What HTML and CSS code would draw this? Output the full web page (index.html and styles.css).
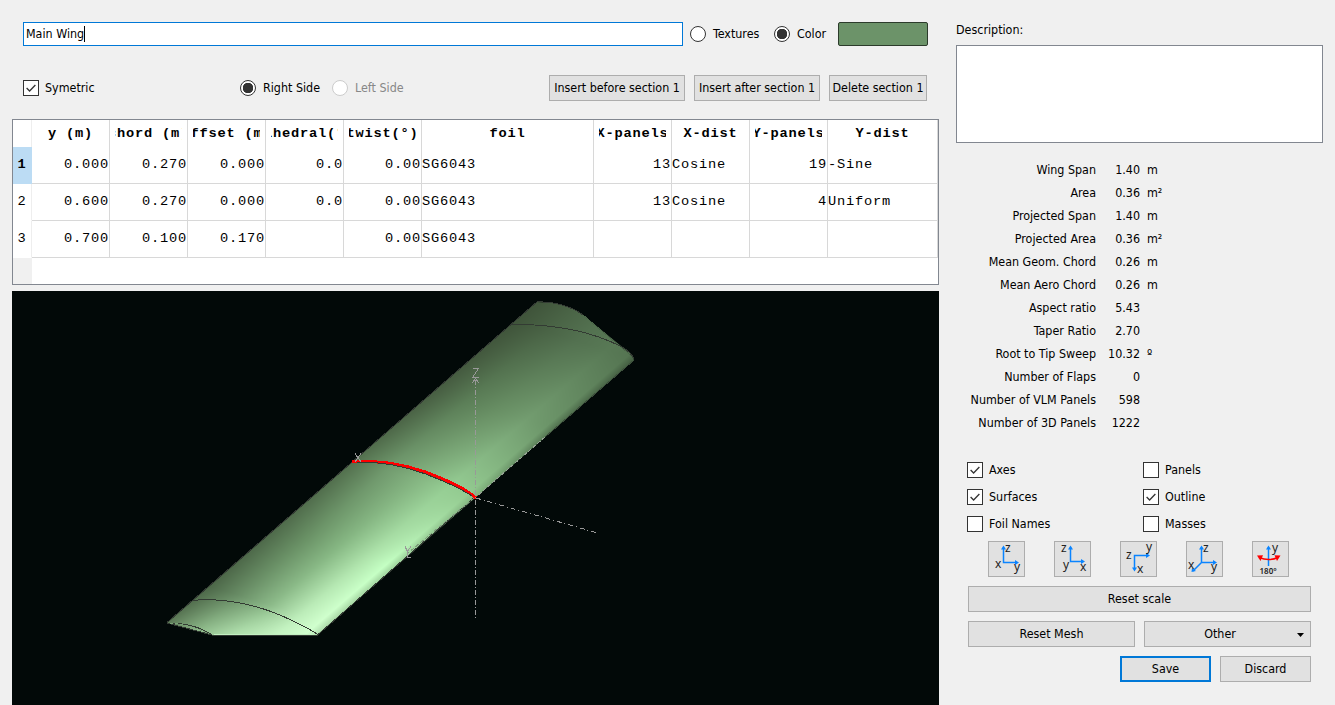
FILE: index.html
```
<!DOCTYPE html>
<html lang="en">
<head>
<meta charset="utf-8">
<title>Wing Edition</title>
<link rel="stylesheet" href="styles.css">
</head>
<body>
<div class="dialog">
  <main class="editor">
    <div class="name-row">
      <div class="name-input">Main Wing<span class="caret"></span></div>
      <span class="radio textures"></span><span class="txt tex-label">Textures</span>
      <span class="radio on"></span><span class="txt color-label">Color</span>
      <span class="swatch"></span>
    </div>
    <div class="side-row">
      <span class="check on"><svg viewBox="0 0 16 16"><path d="M3 8l3.4 3.4L13 4.6"/></svg></span><span class="txt sym-label">Symetric</span>
      <span class="radio on"></span><span class="txt right-label">Right Side</span>
      <span class="radio off"></span><span class="txt left-label">Left Side</span>
      <div class="section-buttons">
        <button class="btn before">Insert before section 1</button>
        <button class="btn after">Insert after section 1</button>
        <button class="btn delete">Delete section 1</button>
      </div>
    </div>
    <div class="table">
      <div class="tr head"><div class="rh"></div><div><span>y (m)</span></div><div><span>chord (m)</span></div><div><span>offset (m)</span></div><div><span>dihedral(°)</span></div><div><span>twist(°)</span></div><div><span>foil</span></div><div><span>X-panels</span></div><div><span>X-dist</span></div><div><span>Y-panels</span></div><div><span>Y-dist</span></div></div>
      <div class="tr"><div class="rh current">1</div><div class="n">0.000</div><div class="n">0.270</div><div class="n">0.000</div><div class="n">0.0</div><div class="n">0.00</div><div>SG6043</div><div class="n">13</div><div>Cosine</div><div class="n">19</div><div>-Sine</div></div>
      <div class="tr"><div class="rh">2</div><div class="n">0.600</div><div class="n">0.270</div><div class="n">0.000</div><div class="n">0.0</div><div class="n">0.00</div><div>SG6043</div><div class="n">13</div><div>Cosine</div><div class="n">4</div><div>Uniform</div></div>
      <div class="tr"><div class="rh">3</div><div class="n">0.700</div><div class="n">0.100</div><div class="n">0.170</div><div></div><div class="n">0.00</div><div>SG6043</div><div></div><div></div><div></div><div></div></div>
      <div class="rest"></div>
    </div>
    <div class="view3d">
      <canvas id="wing" width="927" height="414"></canvas>
      <svg class="overlay" viewBox="12 291 927 414" shape-rendering="crispEdges" fill="none">
        <g stroke="#333b33">
          <path d="M167 622.500L537.500 301.500L553 303Q571 306 583 315"/>
          <path d="M583 315L634 358"  stroke="#4a6648"/>
          <path d="M634 360L545 437" stroke="#3c503b"/>
          <path d="M475 497L317.500 635H212L167 623"/>
          <path d="M512 324.500H524Q581 326 621 346.500Q631 352 634 359"/>
          <path d="M192 600.500L204 599.500Q250 600 291 620Q310 629 317 634"/>
          <path d="M167 623Q195 623 212 635"/>
        </g>
        <path d="M170 623Q190 624 209 634" stroke="#79a276" stroke-dasharray="3 2"/>
        <path d="M214 634.500H310" stroke="#c2efc0"/>
        <path d="M545 437L476 497" stroke="#93a191" stroke-dasharray="4 2"/>
        <path d="M474 498L408 553" stroke="#7e9b7c" stroke-dasharray="4 2"/>
        <path d="M352 461.500H372Q407 463 443 479Q466 489 476 498" stroke="#f00" stroke-width="3"/>
        <path d="M357 462.500H374Q407 465 443 481Q463 490 472 496" stroke="#333b33"/>
        <g stroke="#999">
          <path d="M475.500 380V619" stroke-dasharray="5 2 1 2"/>
          <path d="M476 498L596 532.500" stroke-dasharray="5 3 1 3"/>
          <path d="M472.500 368.500H478.500L472.500 377.500H478.500M472.500 383.500Q473 380 475.500 378.500Q478 380 478.500 383.500M473 380.500H478"/>
          <path d="M355 453.500L361 462M361 453.500L355 462M405 546.500L407.500 551.500L411 546.500M407.500 551.500V558M407 557.500H411"/>
        </g>
      </svg>
    </div>
  </main>
  <aside class="side">
    <div class="txt desc-label">Description:</div>
    <div class="desc"></div>
    <div class="stats">
      <span>Wing Span</span><b>1.40</b><i>m</i>
      <span>Area</span><b>0.36</b><i>m²</i>
      <span>Projected Span</span><b>1.40</b><i>m</i>
      <span>Projected Area</span><b>0.36</b><i>m²</i>
      <span>Mean Geom. Chord</span><b>0.26</b><i>m</i>
      <span>Mean Aero Chord</span><b>0.26</b><i>m</i>
      <span>Aspect ratio</span><b>5.43</b><i></i>
      <span>Taper Ratio</span><b>2.70</b><i></i>
      <span>Root to Tip Sweep</span><b>10.32</b><i>º</i>
      <span>Number of Flaps</span><b>0</b><i></i>
      <span>Number of VLM Panels</span><b>598</b><i></i>
      <span>Number of 3D Panels</span><b>1222</b><i></i>
    </div>
    <div class="options">
      <label><span class="check"><svg viewBox="0 0 16 16"><path d="M3 8l3.4 3.4L13 4.6"/></svg></span>Axes</label>
      <label><span class="check"></span>Panels</label>
      <label><span class="check"><svg viewBox="0 0 16 16"><path d="M3 8l3.4 3.4L13 4.6"/></svg></span>Surfaces</label>
      <label><span class="check"><svg viewBox="0 0 16 16"><path d="M3 8l3.4 3.4L13 4.6"/></svg></span>Outline</label>
      <label><span class="check"></span>Foil Names</label>
      <label><span class="check"></span>Masses</label>
    </div>
    <div class="views">
      <button class="view"><svg viewBox="0 0 37 36"><path class="ax" d="M15.500 6V21.500H29"/><path class="tip" d="M13 8.500L15.500 4.500L18 8.500zM27 19L31 21.500L27 24z"/><text x="17" y="11">z</text><text x="7" y="27">x</text><text x="26" y="30">y</text></svg></button>
      <button class="view"><svg viewBox="0 0 37 36"><path class="ax" d="M16.500 6V20.500H29"/><path class="tip" d="M14 8.500L16.500 4.500L19 8.500zM27 18L31 20.500L27 23z"/><text x="7" y="11">z</text><text x="9" y="28">y</text><text x="26" y="30">x</text></svg></button>
      <button class="view"><svg viewBox="0 0 37 36"><path class="ax" d="M14.500 28V14.500H28"/><path class="tip" d="M12 26.500L14.500 30.500L17 26.500zM26 12L30 14.500L26 17z"/><text x="6" y="18">z</text><text x="26" y="10">y</text><text x="17" y="32">x</text></svg></button>
      <button class="view"><svg viewBox="0 0 37 36"><path class="ax" d="M15.500 6V21.500H29M15.500 21.500L7 30"/><path class="tip" d="M13 8.500L15.500 4.500L18 8.500zM27 19L31 21.500L27 24zM6 27L10 30L5.500 31z"/><text x="17" y="11">z</text><text x="2" y="28">x</text><text x="25" y="30">y</text></svg></button>
      <button class="view"><svg viewBox="0 0 37 36"><path class="ax" d="M16.500 6V25"/><path class="tip" d="M14 8.500L16.500 4.500L19 8.500z"/><path d="M7 16.500Q17 20.500 26 16.500" fill="none" stroke="red" stroke-width="1.500"/><path d="M5 14.500L11 14.300L8.500 20zM28.500 14.500L22.500 14.300L25 20z" fill="red"/><text x="20" y="11">y</text><text class="deg" x="7.500" y="32.500">180°</text></svg></button>
    </div>
    <button class="btn wide">Reset scale</button>
    <div class="pair">
      <button class="btn">Reset Mesh</button>
      <button class="btn other">Other<svg class="arrow" width="7" height="4" viewBox="0 0 7 4"><path d="M0 0H7L3.500 4z"/></svg></button>
    </div>
    <div class="actions">
      <button class="btn save">Save</button>
      <button class="btn">Discard</button>
    </div>
  </aside>
</div>
<script src="wing.js"></script>
</body>
</html>
```
FILE: styles.css
```
* { box-sizing: border-box; }
body { margin: 0; background: #f0f0f0; color: #000; font: 12.4px/16px "DejaVu Sans Condensed", "DejaVu Sans", sans-serif; font-stretch: condensed; overflow: hidden; }
.dialog { display: flex; width: 1335px; height: 705px; }
.editor { width: 939px; padding: 22px 0 0 12px; display: flex; flex-direction: column; }
.txt { white-space: nowrap; }
.name-row { display: flex; align-items: center; height: 24px; padding-left: 11px; }
.name-input { width: 660px; height: 24px; border: 1px solid #0078d7; background: #fff; padding: 3px 2px; display: flex; align-items: center; margin-right: 7px; }
.caret { width: 1px; height: 16px; background: #000; }
.radio { width: 16px; height: 16px; flex: none; border: 1px solid #333; border-radius: 50%; background: #fff; }
.radio.on { background: radial-gradient(circle, #333 0 5px, #fff 5.500px); }
.radio.off { border-color: #ccc; }
.tex-label { margin-left: 7px; width: 61px; }
.color-label { margin-left: 7px; width: 41px; }
.swatch { width: 90px; height: 24px; background: #6c9369; border: 1px solid #2c3b2b; border-radius: 2px; }
.side-row { display: flex; align-items: center; height: 26px; margin-top: 29px; padding-left: 11px; }
.check { width: 16px; height: 16px; flex: none; border: 1px solid #333; background: #fff; }
.check svg { display: block; width: 14px; height: 14px; fill: none; stroke: #333; stroke-width: 1.500; }
.sym-label { margin-left: 6px; width: 195px; }
.right-label { margin-left: 7px; width: 69px; }
.left-label { margin-left: 7px; color: #878787; }
.section-buttons { display: flex; gap: 9px; margin-left: auto; margin-right: 12px; }
.btn { font: inherit; color: #000; height: 26px; border: 1px solid #adadad; background: #e1e1e1; padding: 0; white-space: nowrap; }
.before { width: 136px; }
.after { width: 126px; }
.delete { width: 98px; }
.table { height: 166px; margin-top: 18px; border: 1px solid #828790; background: #fff; font: 13.700px/16px "Liberation Mono", monospace; letter-spacing: .78px; }
.tr { display: grid; grid-template-columns: 19px 78px 78px 78px 78px 78px 172px 78px 78px 78px 110px; height: 37px; }
.tr > div { border-right: 1px solid #d8d8d8; border-bottom: 1px solid #d8d8d8; display: flex; align-items: center; overflow: hidden; white-space: nowrap; padding-bottom: 1px; }
.tr > .n { justify-content: flex-end; }
.tr > .rh { justify-content: center; border-bottom-color: #fff; border-right-color: #eee; }
.tr > .current { background: #bcdcf4; border-color: #bcdcf4; font-weight: bold; }
.head { height: 27px; font-weight: bold; }
.head > div { border-bottom: 0; justify-content: center; padding: 0 5px; }
.head span { width: 100%; display: flex; justify-content: center; overflow: hidden; white-space: pre; }
.rest { width: 19px; height: 26px; background: #f0f0f0; }
.view3d { position: relative; height: 414px; margin-top: 6px; background: #020908; }
.view3d canvas { display: block; }
.overlay { position: absolute; inset: 0; width: 927px; height: 414px; }
.side { width: 396px; padding: 22px 12px 0 17px; }
.desc { width: 367px; height: 98px; border: 1px solid #828790; background: #fff; margin-top: 7px; }
.stats { display: grid; grid-template-columns: 140px 44px 40px; grid-auto-rows: 23px; align-items: center; margin-top: 15px; text-align: right; }
.stats b, .stats i { font-weight: normal; font-style: normal; }
.stats i { text-align: left; padding-left: 7px; }
.options { display: grid; grid-template-columns: 176px 176px; grid-auto-rows: 27px; margin: 22px 0 0 11px; }
.options label { display: flex; align-items: center; gap: 6px; }
.views { display: flex; gap: 29px; margin: 4px 0 0 32px; }
.view { width: 37px; height: 36px; padding: 0; border: 1px solid #adadad; background: #e1e1e1; }
.view svg { display: block; width: 37px; height: 36px; margin: -1px; font: 12px "Noto Sans", sans-serif; fill: #222; }
.view .ax { fill: none; stroke: #0a84ff; stroke-width: 1.500; }
.view .tip { fill: #0a84ff; }
.view .deg { font-size: 8px; font-weight: 600; }
.wide { display: block; width: 343px; margin: 9px 0 0 12px; }
.pair { display: grid; grid-template-columns: 167px 167px; gap: 9px; margin: 9px 0 0 12px; }
.other { position: relative; padding-right: 15px; }
.arrow { position: absolute; right: 6px; top: 11px; }
.actions { display: flex; gap: 9px; margin: 9px 0 0 164px; }
.actions .btn { width: 91px; }
.actions .save { border: 2px solid #0078d7; }
```
FILE: wing.js
```
// Interpolates surface shading over span (rows) and chord (columns), then trims it to the planform.
const canvas = document.getElementById('wing');
const ctx = canvas.getContext('2d');
const spans = [-1, -0.5, 0, 0.5, 0.9, 1.15];
const chords = [0, 0.25, 0.5, 0.75, 0.92, 1];
const shades = [
  ['40553b', '4a6446', '537150', '587955', '557552', '3f583d'],
  ['485f43', '5b7e57', '688f64', '739d70', '6c9569', '4c6b4a'],
  ['557350', '719a6e', '84b481', '96ce94', '94cb91', '7fb07c'],
  ['506c4c', '6a9266', '86b783', 'aee3ab', 'c4ffc3', '98cc96'],
  ['4d6849', '6b9068', '8cba89', 'bcecb9', 'd0ffcd', 'a8d6a5'],
  ['5d7b58', '8fbb8b', 'b8e8b5', 'cdfbca', 'd0ffd0', 'c0f0c0']
].map(r => r.map(h => [0, 2, 4].map(i => parseInt(h.substr(i, 2), 16))));

function locate(list, v) {
  v = Math.max(list[0], Math.min(list[list.length - 1], v));
  let i = 0;
  while (i < list.length - 2 && v > list[i + 1]) i++;
  return [i, (v - list[i]) / (list[i + 1] - list[i])];
}
const image = ctx.createImageData(927, 414);
const det = -161 * 36.5 - 121 * 139;
for (let y = 0; y < 414; y++) {
  for (let x = 0; x < 927; x++) {
    const px = x + 12 - 355, py = y + 291 - 461;
    const [i, f] = locate(spans, (px * 36.5 - 121 * py) / det);
    const [j, g] = locate(chords, (-161 * py - 139 * px) / det);
    const p = (y * 927 + x) * 4;
    for (let k = 0; k < 3; k++) {
      image.data[p + k] = (shades[i][j][k] * (1 - g) + shades[i][j + 1][k] * g) * (1 - f)
        + (shades[i + 1][j][k] * (1 - g) + shades[i + 1][j + 1][k] * g) * f;
    }
    image.data[p + 3] = 255;
  }
}
ctx.putImageData(image, 0, 0);
ctx.globalCompositeOperation = 'destination-in';
ctx.translate(-12, -291);
ctx.beginPath();
ctx.moveTo(167, 623);
ctx.lineTo(537, 302);
ctx.lineTo(553, 303);
ctx.quadraticCurveTo(571, 306, 583, 315);
ctx.lineTo(621, 346);
ctx.quadraticCurveTo(631, 352, 634, 360);
ctx.lineTo(317, 635);
ctx.lineTo(212, 635);
ctx.closePath();
ctx.fill();
```
